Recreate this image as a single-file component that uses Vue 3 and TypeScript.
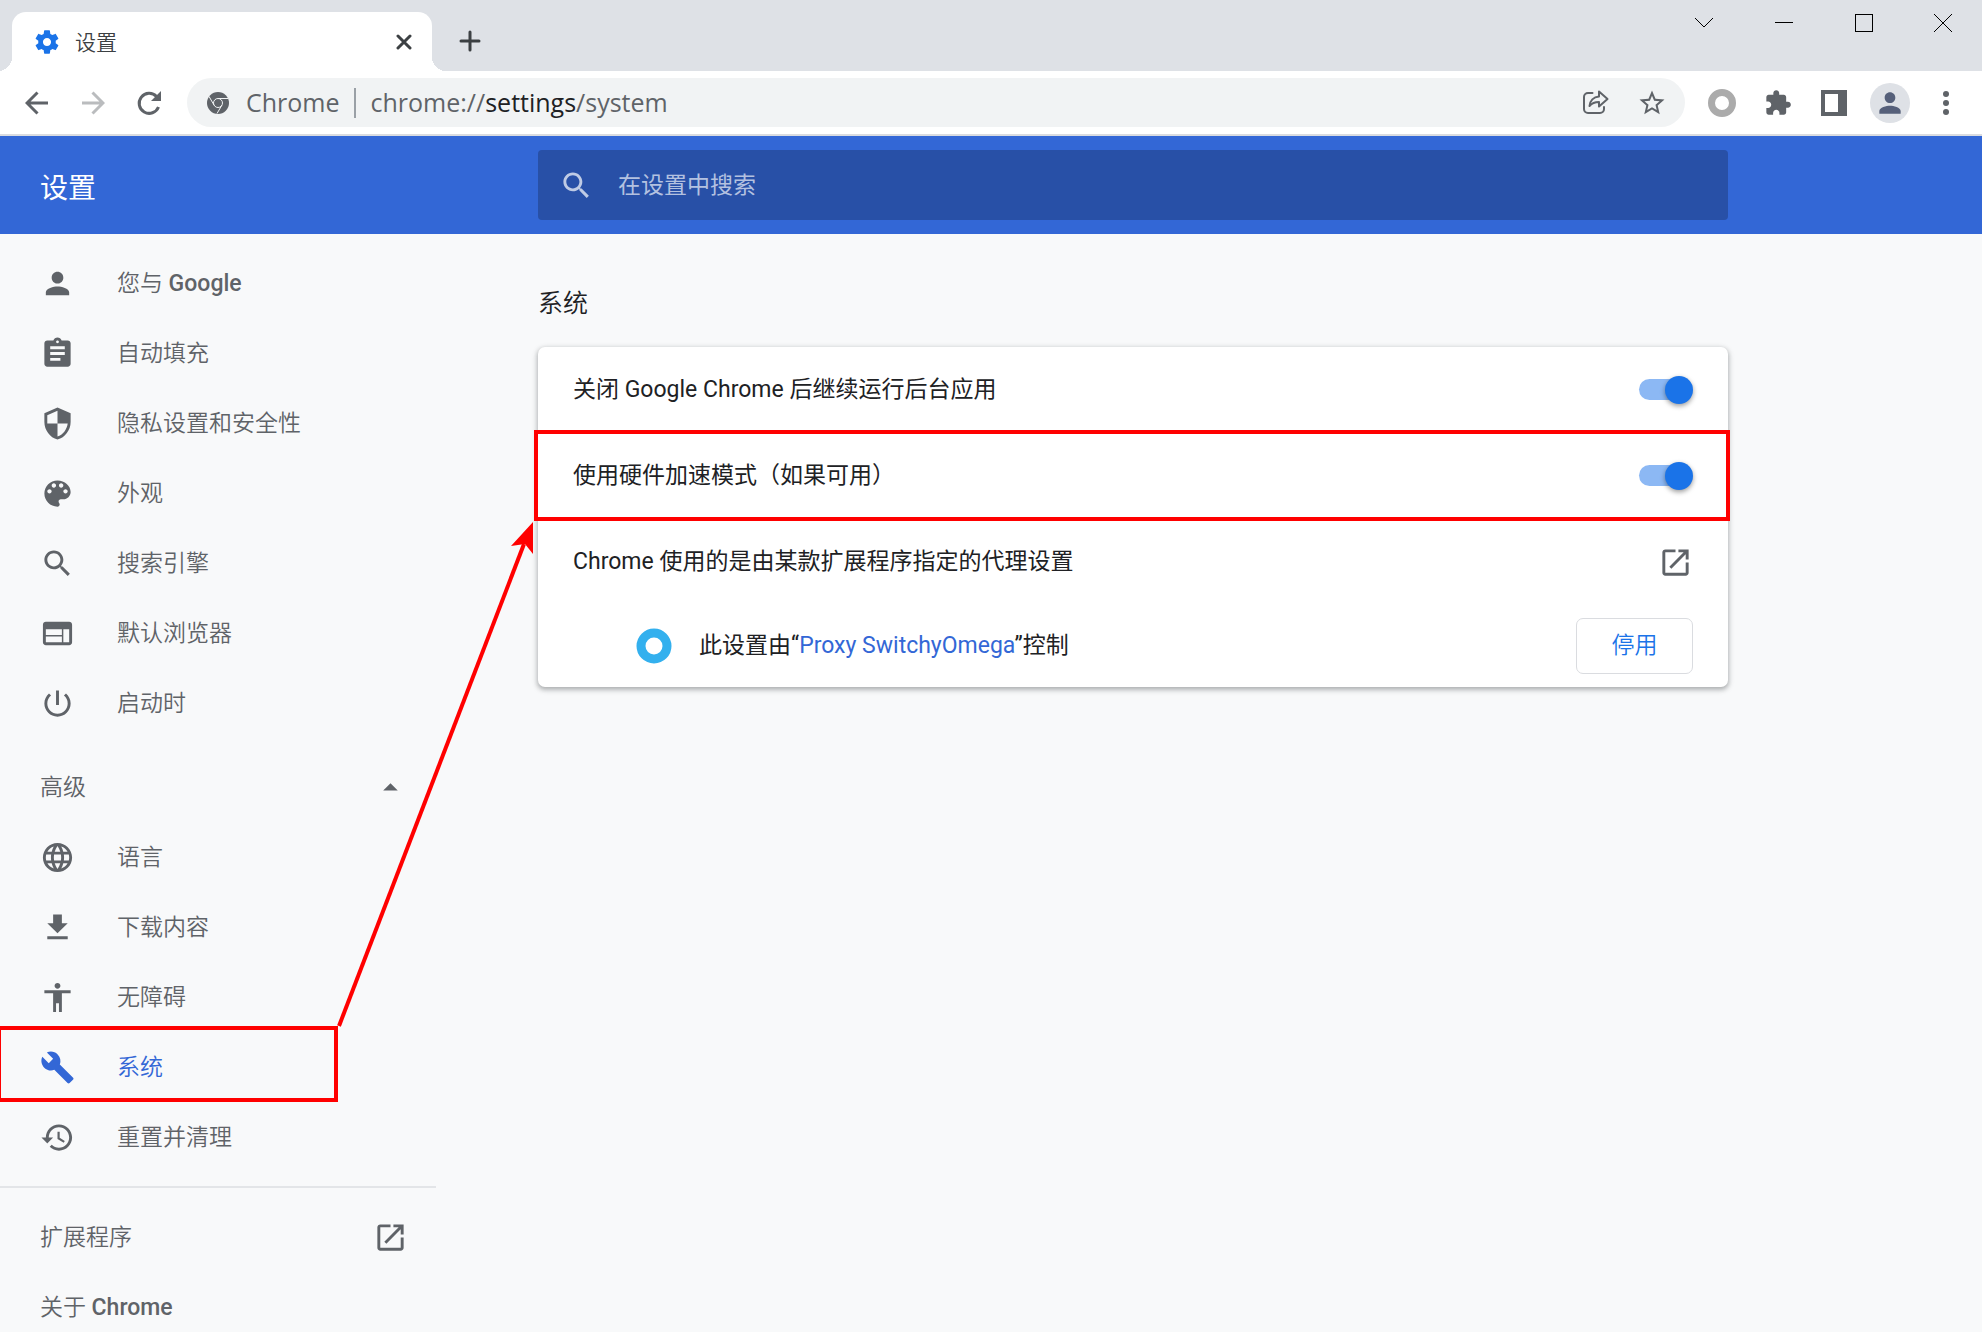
<script setup lang="ts">
import { ref } from 'vue'

interface MenuItem {
  id: string
  label: string
  latin?: string
  icon: string
}

const basicItems: MenuItem[] = [
  { id: 'people', label: '您与 ', latin: 'Google', icon: 'M12 12c2.21 0 4-1.79 4-4s-1.79-4-4-4-4 1.79-4 4 1.79 4 4 4zm0 2c-2.67 0-8 1.34-8 4v2h16v-2c0-2.66-5.33-4-8-4z' },
  { id: 'autofill', label: '自动填充', icon: 'M19 3h-4.18C14.4 1.84 13.3 1 12 1c-1.3 0-2.4.84-2.82 2H5c-1.1 0-2 .9-2 2v14c0 1.1.9 2 2 2h14c1.1 0 2-.9 2-2V5c0-1.1-.9-2-2-2zm-7 0c.55 0 1 .45 1 1s-.45 1-1 1-1-.45-1-1 .45-1 1-1zm2 14H7v-2h7v2zm3-4H7v-2h10v2zm0-4H7V7h10v2z' },
  { id: 'privacy', label: '隐私设置和安全性', icon: 'M12 1L3 5v6c0 5.55 3.84 10.74 9 12 5.16-1.26 9-6.45 9-12V5l-9-4zm0 10.99h7c-.53 4.12-3.28 7.79-7 8.94V12H5V6.3l7-3.11v8.8z' },
  { id: 'appearance', label: '外观', icon: 'M12 3c-4.97 0-9 4.03-9 9s4.03 9 9 9c.83 0 1.5-.67 1.5-1.5 0-.39-.15-.74-.39-1.01-.23-.26-.38-.61-.38-.99 0-.83.67-1.5 1.5-1.5H16c2.76 0 5-2.24 5-5 0-4.42-4.03-8-9-8zm-5.5 9c-.83 0-1.5-.67-1.5-1.5S5.67 9 6.5 9 8 9.67 8 10.5 7.33 12 6.5 12zm3-4C8.67 8 8 7.33 8 6.5S8.67 5 9.5 5s1.5.67 1.5 1.5S10.33 8 9.5 8zm5 0c-.83 0-1.5-.67-1.5-1.5S13.67 5 14.5 5s1.5.67 1.5 1.5S15.33 8 14.5 8zm3 4c-.83 0-1.5-.67-1.5-1.5S16.67 9 17.5 9s1.5.67 1.5 1.5-.67 1.5-1.5 1.5z' },
  { id: 'search', label: '搜索引擎', icon: 'M15.5 14h-.79l-.28-.27C15.41 12.59 16 11.11 16 9.5 16 5.91 13.09 3 9.5 3S3 5.91 3 9.5 5.91 16 9.5 16c1.61 0 3.09-.59 4.23-1.57l.27.28v.79l5 4.99L20.49 19l-4.99-5zm-6 0C7.01 14 5 11.99 5 9.5S7.01 5 9.5 5 14 7.01 14 9.5 11.99 14 9.5 14z' },
  { id: 'browser', label: '默认浏览器', icon: 'M20 4H4c-1.1 0-1.99.9-1.99 2L2 18c0 1.1.9 2 2 2h16c1.1 0 2-.9 2-2V6c0-1.1-.9-2-2-2zm-5 14H4v-4h11v4zm0-5H4V9h11v4zm5 5h-4V9h4v9z' },
  { id: 'startup', label: '启动时', icon: 'M13 3h-2v10h2V3zm4.83 2.17l-1.42 1.42C17.99 7.86 19 9.81 19 12c0 3.87-3.13 7-7 7s-7-3.13-7-7c0-2.19 1.01-4.14 2.58-5.42L6.17 5.17C4.23 6.82 3 9.26 3 12c0 4.97 4.03 9 9 9s9-4.03 9-9c0-2.74-1.23-5.18-3.17-6.83z' },
]

const advancedItems: MenuItem[] = [
  { id: 'languages', label: '语言', icon: 'M11.99 2C6.47 2 2 6.48 2 12s4.47 10 9.99 10C17.52 22 22 17.52 22 12S17.52 2 11.99 2zm6.93 6h-2.95c-.32-1.25-.78-2.45-1.38-3.56 1.84.63 3.37 1.91 4.33 3.56zM12 4.04c.83 1.2 1.48 2.53 1.91 3.96h-3.82c.43-1.43 1.08-2.76 1.91-3.96zM4.26 14C4.1 13.36 4 12.69 4 12s.1-1.36.26-2h3.38c-.08.66-.14 1.32-.14 2 0 .68.06 1.34.14 2H4.26zm.82 2h2.95c.32 1.25.78 2.45 1.38 3.56-1.84-.63-3.37-1.9-4.33-3.56zm2.95-8H5.08c.96-1.66 2.49-2.93 4.33-3.56C8.81 5.55 8.35 6.75 8.03 8zM12 19.96c-.83-1.2-1.48-2.53-1.91-3.96h3.82c-.43 1.43-1.08 2.76-1.91 3.96zM14.34 14H9.66c-.09-.66-.16-1.32-.16-2 0-.68.07-1.35.16-2h4.68c.09.65.16 1.32.16 2 0 .68-.07 1.34-.16 2zm.25 5.56c.6-1.11 1.06-2.31 1.38-3.56h2.95c-.96 1.65-2.49 2.93-4.33 3.56zM16.36 14c.08-.66.14-1.32.14-2 0-.68-.06-1.34-.14-2h3.38c.16.64.26 1.31.26 2s-.1 1.36-.26 2h-3.38z' },
  { id: 'downloads', label: '下载内容', icon: 'M19 9h-4V3H9v6H5l7 7 7-7zM5 18v2h14v-2H5z' },
  { id: 'a11y', label: '无障碍', icon: 'M12 2c1.1 0 2 .9 2 2s-.9 2-2 2-2-.9-2-2 .9-2 2-2zm9 7h-6v13h-2v-6h-2v6H9V9H3V7h18v2z' },
  { id: 'system', label: '系统', icon: 'M22.7 19l-9.1-9.1c.9-2.3.4-5-1.5-6.9-2-2-5-2.4-7.4-1.3L9 6 6 9 1.6 4.7C.4 7.1.9 10.1 2.9 12.1c1.9 1.9 4.6 2.4 6.9 1.5l9.1 9.1c.4.4 1 .4 1.4 0l2.3-2.3c.5-.4.5-1.1.1-1.4z' },
  { id: 'reset', label: '重置并清理', icon: 'M13 3c-4.97 0-9 4.03-9 9H1l3.89 3.89.07.14L9 12H6c0-3.87 3.13-7 7-7s7 3.13 7 7-3.13 7-7 7c-1.93 0-3.68-.79-4.94-2.06l-1.42 1.42C8.27 19.99 10.51 21 13 21c4.97 0 9-4.03 9-9s-4.03-9-9-9zm-1 5v5l4.28 2.54.72-1.21-3.5-2.08V8H12z' },
]

const searchIcon = basicItems[4].icon
const personIcon = basicItems[0].icon
const launchIcon = 'M19 19H5V5h7V3H5c-1.11 0-2 .9-2 2v14c0 1.1.89 2 2 2h14c1.1 0 2-.9 2-2v-7h-2v7zM14 3v2h3.59l-9.83 9.83 1.41 1.41L19 6.41V10h2V3h-7z'

const active = ref('system')
const advancedOpen = ref(true)
const query = ref('')
const background = ref(true)
const hardware = ref(true)
</script>

<template>
  <div class="browser">
    <header class="tabstrip">
      <div class="tab">
        <svg class="favicon" viewBox="0 0 24 24"><path d="M19.43 12.98c.04-.32.07-.64.07-.98s-.03-.66-.07-.98l2.11-1.65c.19-.15.24-.42.12-.64l-2-3.46c-.12-.22-.39-.3-.61-.22l-2.49 1c-.52-.4-1.08-.73-1.69-.98l-.38-2.65C14.46 2.18 14.25 2 14 2h-4c-.25 0-.46.18-.49.42l-.38 2.65c-.61.25-1.17.59-1.69.98l-2.49-1c-.23-.09-.49 0-.61.22l-2 3.46c-.13.22-.07.49.12.64l2.11 1.65c-.04.32-.07.65-.07.98s.03.66.07.98l-2.11 1.65c-.19.15-.24.42-.12.64l2 3.46c.12.22.39.3.61.22l2.49-1c.52.4 1.08.73 1.69.98l.38 2.65c.03.24.24.42.49.42h4c.25 0 .46-.18.49-.42l.38-2.65c.61-.25 1.17-.59 1.69-.98l2.49 1c.23.09.49 0 .61-.22l2-3.46c.12-.22.07-.49-.12-.64l-2.11-1.65zM12 15.5c-1.93 0-3.5-1.57-3.5-3.5s1.57-3.5 3.5-3.5 3.5 1.57 3.5 3.5-1.57 3.5-3.5 3.5z" /></svg>
        <span class="tab-title">设置</span>
        <button class="plain tab-close" aria-label="关闭标签页">
          <svg width="16" height="16" viewBox="0 0 16 16"><path d="M2 2l12 12M14 2L2 14" /></svg>
        </button>
      </div>
      <button class="plain new-tab" aria-label="新标签页">
        <svg width="22" height="22" viewBox="0 0 22 22"><path d="M11 2v18M2 11h18" /></svg>
      </button>
      <div class="window-controls">
        <button class="plain" aria-label="搜索标签页"><svg width="20" height="20" viewBox="0 0 20 20"><path d="M1 5l9 9 9-9" /></svg></button>
        <button class="plain" aria-label="最小化"><svg width="20" height="20" viewBox="0 0 20 20" shape-rendering="crispEdges"><path d="M1 9.5h18" /></svg></button>
        <button class="plain" aria-label="最大化"><svg width="20" height="20" viewBox="0 0 20 20" shape-rendering="crispEdges"><path d="M1.5 1.5h17v17h-17z" /></svg></button>
        <button class="plain" aria-label="关闭"><svg width="20" height="20" viewBox="0 0 20 20"><path d="M1 1l18 18M19 1L1 19" /></svg></button>
      </div>
    </header>

    <div class="toolbar">
      <nav class="nav-buttons" aria-label="导航">
        <button class="plain" aria-label="返回"><svg width="24" height="24" viewBox="0 0 24 24"><path class="line" d="M23 12H2.5M12.5 1.5L2 12l10.5 10.5" /></svg></button>
        <button class="plain dim" aria-label="前进"><svg width="24" height="24" viewBox="0 0 24 24"><path class="line" d="M1 12h20.5M11.5 1.5L22 12 11.5 22.5" /></svg></button>
        <button class="plain" aria-label="重新加载"><svg width="26" height="26" viewBox="0 0 26 26"><path class="line" d="M22.5 17A10 10 0 1 1 20.5 6.5" /><path d="M25 1v10H15z" /></svg></button>
      </nav>
      <div class="omnibox">
        <svg class="chrome-mark" viewBox="0 0 22 22">
          <circle cx="11" cy="11" r="11" />
          <circle class="cut" cx="11" cy="11" r="4.5" />
          <path class="cut" d="M11 6.5h10M7.1 13.2L2 4.4M14.9 13.2L10 21.5" />
        </svg>
        <span class="scheme">Chrome</span>
        <div class="url" role="textbox" aria-label="地址栏">chrome://<b>settings</b>/system</div>
        <button class="plain" aria-label="分享此页"><svg width="26" height="26" viewBox="0 0 26 26"><path class="line thin" d="M9.5 3H5a4 4 0 0 0-4 4v12a4 4 0 0 0 4 4h12a4 4 0 0 0 4-4v-2" /><path class="line thin" d="M16 1.5l8.5 7.5-8.5 7.5v-4.5c-4 0-7 1-9.5 4 .5-5 4-9 9.5-9.5z" /></svg></button>
        <button class="plain" aria-label="为此标签页添加书签"><svg width="30" height="30" viewBox="0 0 24 24"><path d="M22 9.24l-7.19-.62L12 2 9.19 8.63 2 9.24l5.46 4.73L5.82 21 12 17.27 18.18 21l-1.63-7.03L22 9.24zM12 15.4l-3.76 2.27 1-4.28-3.32-2.88 4.38-.38L12 6.1l1.71 4.04 4.38.38-3.32 2.88 1 4.28L12 15.4z" /></svg></button>
      </div>
      <div class="actions">
        <button class="plain" aria-label="Proxy SwitchyOmega"><svg width="28" height="28" viewBox="0 0 28 28"><circle class="ring grey" cx="14" cy="14" r="10.5" /></svg></button>
        <button class="plain" aria-label="扩展程序"><svg width="28" height="28" viewBox="0 0 24 24"><path d="M20.5 11H19V7c0-1.1-.9-2-2-2h-4V3.5C13 2.12 11.88 1 10.5 1S8 2.12 8 3.5V5H4c-1.1 0-1.99.9-1.99 2v3.8H3.5c1.49 0 2.7 1.21 2.7 2.7s-1.21 2.7-2.7 2.7H2V20c0 1.1.9 2 2 2h3.8v-1.5c0-1.49 1.21-2.7 2.7-2.7 1.49 0 2.7 1.21 2.7 2.7V22H17c1.1 0 2-.9 2-2v-4h1.5c1.38 0 2.5-1.12 2.5-2.5S21.88 11 20.5 11z" /></svg></button>
        <button class="plain" aria-label="侧边栏"><svg width="26" height="26" viewBox="0 0 26 26"><path fill-rule="evenodd" d="M0 0h26v26H0zM4 4v18h13V4z" /></svg></button>
        <button class="plain avatar" aria-label="个人资料"><svg width="32" height="32" viewBox="0 0 24 24"><path :d="personIcon" /></svg></button>
        <button class="plain" aria-label="自定义及控制"><svg width="24" height="24" viewBox="0 0 24 24"><circle cx="12" cy="3" r="3" /><circle cx="12" cy="12" r="3" /><circle cx="12" cy="21" r="3" /></svg></button>
      </div>
    </div>

    <div class="banner">
      <h1>设置</h1>
      <label class="search">
        <svg class="icon" viewBox="0 0 24 24"><path :d="searchIcon" /></svg>
        <input v-model="query" type="search" placeholder="在设置中搜索" aria-label="在设置中搜索">
      </label>
    </div>

    <div class="content">
      <nav class="sidebar" aria-label="设置">
        <a
          v-for="item in basicItems"
          :key="item.id"
          class="item"
          :class="{ active: active === item.id }"
          :href="'#' + item.id"
          @click.prevent="active = item.id"
        >
          <svg class="icon" viewBox="0 0 24 24"><path :d="item.icon" /></svg>
          <span class="label">{{ item.label }}<b v-if="item.latin">{{ item.latin }}</b></span>
        </a>
        <button class="plain item group" :aria-expanded="advancedOpen" @click="advancedOpen = !advancedOpen">
          <span class="label">高级</span>
          <svg class="icon" viewBox="0 0 24 24"><path :d="advancedOpen ? 'M7 14l5-5 5 5z' : 'M7 10l5 5 5-5z'" /></svg>
        </button>
        <template v-if="advancedOpen">
          <a
            v-for="item in advancedItems"
            :key="item.id"
            class="item"
            :class="{ active: active === item.id, marked: item.id === 'system' }"
            :href="'#' + item.id"
            @click.prevent="active = item.id"
          >
            <svg class="icon" viewBox="0 0 24 24"><path :d="item.icon" /></svg>
            <span class="label">{{ item.label }}</span>
          </a>
        </template>
        <hr>
        <a class="item spread" href="#extensions">
          <span class="label">扩展程序</span>
          <svg class="icon" viewBox="0 0 24 24"><path :d="launchIcon" /></svg>
        </a>
        <a class="item" href="#about"><span class="label">关于 <b>Chrome</b></span></a>
      </nav>

      <main>
        <h2>系统</h2>
        <section class="card">
          <label class="row">
            <span>关闭 Google Chrome 后继续运行后台应用</span>
            <input v-model="background" class="toggle" type="checkbox">
          </label>
          <label class="row marked">
            <span>使用硬件加速模式（如果可用）</span>
            <input v-model="hardware" class="toggle" type="checkbox">
          </label>
          <div class="row">
            <span>Chrome 使用的是由某款扩展程序指定的代理设置</span>
            <button class="plain" aria-label="打开代理设置"><svg class="icon" viewBox="0 0 24 24"><path :d="launchIcon" /></svg></button>
          </div>
          <div class="row controlled">
            <svg width="36" height="36" viewBox="0 0 36 36"><circle class="ring blue" cx="18" cy="18" r="13" /></svg>
            <span class="grow">此设置由“<a href="#switchyomega">Proxy SwitchyOmega</a>”控制</span>
            <button class="disable">停用</button>
          </div>
        </section>
      </main>

      <svg class="arrow" width="200" height="510" viewBox="0 0 200 510" aria-hidden="true">
        <path class="shaft" d="M5 508L190 26" />
        <path class="head" d="M199 4v32l-8-10-14 2z" />
      </svg>
    </div>
  </div>
</template>

<style>
body {
  margin: 0;
}
</style>

<style scoped>
.browser {
  display: flex;
  flex-direction: column;
  height: 100vh;
  overflow: hidden;
  background: #f8f9fa;
  color: #202124;
  font: 23px/34px Roboto, "Noto Sans CJK SC", sans-serif;
}

* {
  box-sizing: border-box;
}

svg {
  display: block;
  flex: none;
  fill: currentColor;
}

.plain {
  display: flex;
  align-items: center;
  justify-content: center;
  padding: 0;
  border: 0;
  background: none;
  color: inherit;
  font: inherit;
}

.icon {
  width: 35px;
  height: 35px;
}

.line {
  fill: none;
  stroke: currentColor;
  stroke-width: 3;
}

.thin {
  stroke-width: 2;
  stroke-linejoin: round;
  stroke-linecap: round;
}

.ring {
  fill: none;
}

.ring.grey {
  stroke: #ababab;
  stroke-width: 7;
}

.ring.blue {
  stroke: #33b0ee;
  stroke-width: 9;
}

/* Tab strip */
.tabstrip {
  display: flex;
  flex: none;
  align-items: flex-start;
  height: 71px;
  padding-left: 12px;
  background: #dee1e6;
}

.tab {
  position: relative;
  display: flex;
  align-items: center;
  width: 420px;
  height: 59px;
  margin-top: 12px;
  padding: 0 20px 0 21px;
  border-radius: 14px 14px 0 0;
  background: #fff;
  color: #3c4043;
}

.tab::before,
.tab::after {
  content: "";
  position: absolute;
  bottom: 0;
  width: 14px;
  height: 14px;
}

.tab::before {
  right: 100%;
  background: radial-gradient(circle at 0 0, #dee1e6 14px, #fff 14px);
}

.tab::after {
  left: 100%;
  background: radial-gradient(circle at 100% 0, #dee1e6 14px, #fff 14px);
}

.favicon {
  width: 28px;
  height: 28px;
  fill: #1a73e8;
}

.tab-title {
  flex: 1;
  margin-left: 14px;
  padding-top: 2px;
  font-size: 21px;
  font-weight: 350;
}

.tab-close svg,
.new-tab svg {
  stroke: #3c4043;
  stroke-linecap: round;
  stroke-width: 3;
}

.new-tab {
  width: 42px;
  height: 42px;
  margin: 20px 0 0 17px;
}

.window-controls {
  display: flex;
  margin-left: auto;
}

.window-controls .plain {
  width: 80px;
  height: 46px;
}

.window-controls .plain:last-child {
  width: 78px;
}

.window-controls svg {
  fill: none;
  stroke: #000;
}

/* Toolbar */
.toolbar {
  display: flex;
  flex: none;
  align-items: center;
  height: 65px;
  padding: 0 16px 0 17px;
  border-bottom: 2px solid #dadce0;
  background: #fff;
  color: #5f6368;
}

.nav-buttons {
  display: flex;
  gap: 16px;
  margin-right: 18px;
}

.nav-buttons .plain {
  width: 40px;
  height: 40px;
}

.dim {
  color: #babcbe;
}

.omnibox {
  display: flex;
  flex: 1;
  align-items: center;
  gap: 28px;
  height: 49px;
  padding: 0 18px 0 20px;
  border-radius: 25px;
  background: #f1f3f4;
  font: 25px/32px "Open Sans", "Noto Sans", sans-serif;
}

.chrome-mark {
  width: 22px;
  height: 22px;
}

.chrome-mark .cut {
  fill: none;
  stroke: #f1f3f4;
  stroke-width: 1;
}

.scheme,
.url {
  line-height: 28px;
  padding-bottom: 2px;
}

.scheme {
  margin: 0 -13px 0 -11px;
  padding-right: 14px;
  border-right: 2px solid #9aa0a6;
}

.url {
  flex: 1;
}

.url b {
  color: #202124;
  font-weight: 400;
}

.actions {
  display: flex;
  gap: 16px;
  margin-left: 17px;
}

.actions .plain {
  width: 40px;
  height: 40px;
}

.avatar {
  border-radius: 50%;
  background: #dee1e6;
  color: #56607a;
}

/* Settings banner */
.banner {
  display: flex;
  flex: none;
  align-items: center;
  height: 98px;
  background: #3367d6;
  color: #fff;
}

h1 {
  flex: none;
  width: 538px;
  margin: 0;
  padding: 8px 0 0 40px;
  font-size: 28px;
  font-weight: 400;
}

.search {
  display: flex;
  flex: 1;
  align-items: center;
  gap: 24px;
  max-width: 1190px;
  height: 70px;
  padding: 0 21px;
  border-radius: 4px;
  background: #2850a7;
  color: #bfcbe5;
}

.search input {
  flex: 1;
  min-width: 0;
  padding: 2px 0 0;
  border: 0;
  outline: 0;
  background: none;
  color: #fff;
  font: inherit;
}

.search input::placeholder {
  color: #b3c1e0;
  opacity: 1;
}

/* Settings body */
.content {
  position: relative;
  display: flex;
  flex: 1;
  min-height: 0;
}

.sidebar {
  flex: none;
  width: 538px;
  padding-top: 14px;
  color: #5f6368;
}

.item {
  position: relative;
  display: flex;
  align-items: center;
  gap: 42px;
  width: 436px;
  height: 70px;
  padding: 0 28px 0 40px;
  color: inherit;
  text-decoration: none;
}

.label {
  padding-top: 2px;
  font-weight: 350;
}

.label b {
  font-weight: 500;
}

.item.active {
  color: #3367d6;
}

.group,
.spread {
  justify-content: space-between;
}

.group {
  margin-top: 14px;
}

.item.marked::after,
.row.marked::after {
  content: "";
  position: absolute;
  border: 4px solid #f00;
}

.item.marked::after {
  top: -6px;
  right: 98px;
  bottom: 0;
  left: -3px;
}

hr {
  width: 436px;
  height: 2px;
  margin: 14px 0;
  border: 0;
  background: #e3e5e8;
}

main {
  flex: 1;
  max-width: 1190px;
}

h2 {
  margin: 53px 0 26px;
  font-size: 25px;
  font-weight: 350;
}

.card {
  border-radius: 7px;
  background: #fff;
  box-shadow: 0 2px 4px rgba(60, 64, 67, 0.3), 0 2px 5px 2px rgba(60, 64, 67, 0.15);
}

.row {
  position: relative;
  display: flex;
  align-items: center;
  justify-content: space-between;
  height: 86px;
  padding: 0 35px;
}

.row .icon {
  color: #5f6368;
}

.row.marked::after {
  top: -3px;
  right: -2px;
  bottom: -2px;
  left: -4px;
}

.toggle {
  position: relative;
  flex: none;
  width: 54px;
  height: 28px;
  margin: 0;
  appearance: none;
}

.toggle::before {
  content: "";
  position: absolute;
  inset: 3px 4px 4px 0;
  border-radius: 11px;
  background: #bdc1c6;
}

.toggle::after {
  content: "";
  position: absolute;
  top: 0;
  left: 0;
  width: 28px;
  height: 28px;
  border-radius: 50%;
  background: #fff;
  box-shadow: 0 2px 5px rgba(0, 0, 0, 0.4);
}

.toggle:checked::before {
  background: #8cb8f4;
}

.toggle:checked::after {
  left: 26px;
  background: #1a73e8;
}

.controlled {
  height: 82px;
  padding-left: 98px;
}

.grow {
  flex: 1;
  margin-left: 27px;
}

.grow a {
  color: #3367d6;
  text-decoration: none;
}

.disable {
  width: 117px;
  height: 56px;
  padding: 0;
  border: 1px solid #dadce0;
  border-radius: 7px;
  background: #fff;
  color: #1a73e8;
  font: inherit;
  font-weight: 350;
}

.arrow {
  position: absolute;
  top: 284px;
  left: 334px;
  pointer-events: none;
}

.shaft {
  stroke: #f00;
  stroke-width: 4;
}

.head {
  fill: #f00;
}
</style>
